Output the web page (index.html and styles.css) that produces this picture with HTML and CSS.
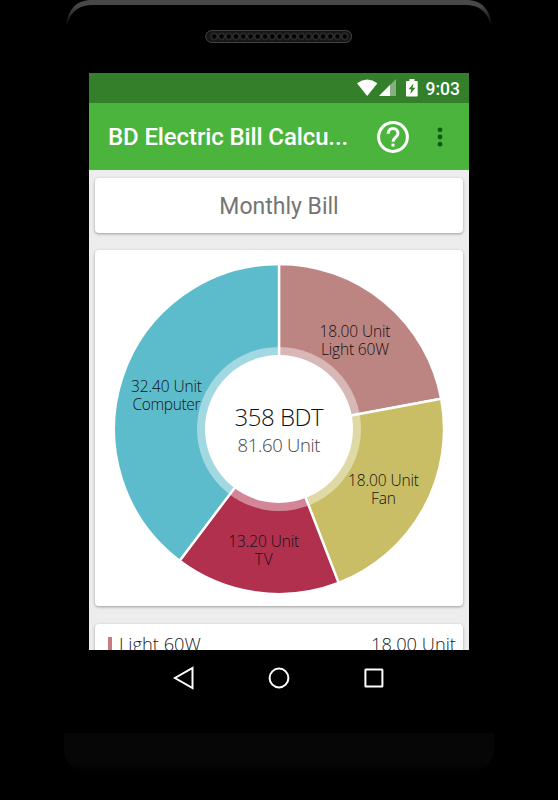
FILE: index.html
```
<!DOCTYPE html>
<html lang="en">
<head>
    <meta charset="UTF-8">
    <meta name="viewport" content="width=device-width, initial-scale=1.0">
    <title>BD Electric Bill Calculator</title>
    <link rel="stylesheet" href="styles.css">
</head>
<body>
    <div class="phone">
        <svg class="phone-top" width="558" height="73" viewBox="0 0 558 73">
            <defs>
                <linearGradient id="rim" x1="0" y1="0" x2="0" y2="28" gradientUnits="userSpaceOnUse">
                    <stop offset="0" stop-color="#484848"/>
                    <stop offset="0.2" stop-color="#484848"/>
                    <stop offset="1" stop-color="#000"/>
                </linearGradient>
                <pattern id="holes" x="210.7" y="32.5" width="7.25" height="8" patternUnits="userSpaceOnUse">
                    <circle cx="3.6" cy="4" r="2.9" fill="#000" stroke="#3c3c3c" stroke-width="1"/>
                </pattern>
            </defs>
            <path d="M66 28C67 10 76 0 92 0H466C482 0 491 10 492 28C488 12 480 5 464 5H94C78 5 70 12 66 28Z" fill="url(#rim)"/>
            <rect x="205.7" y="30.5" width="146" height="12" rx="6" fill="#161616" stroke="#434343"/>
            <rect x="210.7" y="32.5" width="137.7" height="8" fill="url(#holes)"/>
        </svg>

        <div class="screen">
            <div class="status-bar">
                <svg width="56" height="18" viewBox="0 0 56 18">
                    <path d="M0 4.2Q10.2 -3 20.4 4.2L10.2 17Z" fill="#fff"/>
                    <path d="M39 0V17H22Z" fill="#fff" fill-opacity="0.4"/>
                    <path d="M33 6V17H22Z" fill="#fff"/>
                </svg>
                <svg class="battery" width="12" height="18" viewBox="0 0 12 18">
                    <path d="M1 2H3.5V0H8.5V2H11Q11.7 2 11.7 3V16.5Q11.7 17.5 10.7 17.5H1Q0 17.5 0 16.5V3Q0 2 1 2Z" fill="#fff"/>
                    <path d="M7.6 4.5L2.6 10.3H5.3L4.3 15L9.4 8.8H6.5Z" fill="#337f2a"/>
                </svg>
                <span class="clock">9:03</span>
            </div>

            <div class="toolbar">
                <h1>BD Electric Bill Calcu...</h1>
                <svg class="help" width="32" height="32" viewBox="0 0 32 32" fill="none">
                    <circle cx="16" cy="16" r="14.4" stroke="#fff" stroke-width="3"/>
                    <path d="M11.1 12.8C11.1 5.6 21 5.8 21 12.6C21 16.2 16 16.6 16 20.7" stroke="#fff" stroke-width="3"/>
                    <path d="M14.5 22.6H17.5V25.6H14.5Z" fill="#fff"/>
                </svg>
                <svg class="more" width="6" height="20" viewBox="0 0 6 20" fill="#0b5a0e">
                    <circle cx="3" cy="2.8" r="2.4"/>
                    <circle cx="3" cy="10" r="2.4"/>
                    <circle cx="3" cy="17.2" r="2.4"/>
                </svg>
            </div>

            <div class="content">
                <div class="card bill-title">Monthly Bill</div>

                <div class="card chart-card">
                    <svg class="chart" width="368" height="356" viewBox="0 0 368 356">
                        <!-- slices, clockwise from the top -->
                        <g stroke="#fff" stroke-width="2.4">
                            <path d="M184 179V14A165 165 0 0 1 346.2 148.7Z" fill="#bc8582"/>
                            <path d="M184 179L346.2 148.7A165 165 0 0 1 243.6 332.9Z" fill="#c9be66"/>
                            <path d="M184 179L243.6 332.9A165 165 0 0 1 84.6 310.7Z" fill="#b1304e"/>
                            <path d="M184 179L84.6 310.7A165 165 0 0 1 184 14Z" fill="#5dbccb"/>
                        </g>
                        <circle cx="184" cy="179" r="82" fill="#fff" fill-opacity="0.42"/>
                        <circle cx="184" cy="179" r="74" fill="#fff"/>
                        <g class="slice-label">
                            <text x="260" y="87" textLength="71">18.00 Unit</text>
                            <text x="260" y="105" textLength="68">Light 60W</text>
                            <text x="288.5" y="236" textLength="71">18.00 Unit</text>
                            <text x="288.5" y="254" textLength="25">Fan</text>
                            <text x="168.8" y="297" textLength="71">13.20 Unit</text>
                            <text x="168.8" y="315" textLength="18">TV</text>
                            <text x="71.5" y="142" textLength="71">32.40 Unit</text>
                            <text x="71.5" y="160" textLength="68">Computer</text>
                        </g>
                        <text class="total" x="184" y="176" textLength="89">358 BDT</text>
                        <text class="units" x="184" y="202" textLength="83">81.60 Unit</text>
                    </svg>
                </div>

                <div class="card list-card">
                    <span class="marker"></span>
                    <span class="name">Light 60W</span>
                    <span class="value">18.00 Unit</span>
                </div>
            </div>
        </div>

        <div class="nav-bar">
            <svg width="24" height="26" viewBox="0 0 24 26">
                <path d="M20.5 3V23L3 13Z"/>
            </svg>
            <svg width="24" height="26" viewBox="0 0 24 26">
                <circle cx="12" cy="13" r="9.4"/>
            </svg>
            <svg width="24" height="26" viewBox="0 0 24 26">
                <rect x="3.4" y="4.4" width="17" height="17" rx="0.5"/>
            </svg>
        </div>
        <div class="phone-bottom"></div>
    </div>
</body>
</html>
```

FILE: styles.css
```
* {
    box-sizing: border-box;
}

body {
    margin: 0;
    background: #000;
    font-family: Roboto, sans-serif;
}

svg {
    display: block;
    flex: none;
}

.phone {
    width: 558px;
    height: 800px;
    overflow: hidden;
    display: flex;
    flex-direction: column;
    align-items: center;
}

.screen {
    width: 380px;
    height: 577px;
    background: #ededed;
    overflow: hidden;
}

.status-bar {
    height: 30px;
    background: #337f2a;
    display: flex;
    align-items: center;
    justify-content: flex-end;
    padding-right: 9px;
}

.battery {
    margin-right: 8px;
    margin-left: -7px;
}

.clock {
    color: #fff;
    font-size: 17.5px;
    font-weight: 500;
    line-height: 30px;
    padding-top: 2px;
}

.toolbar {
    height: 67px;
    background: #4bb43c;
    display: flex;
    align-items: center;
    padding-left: 19px;
}

h1 {
    margin: 0;
    width: 269px;
    color: #fff;
    font-size: 24px;
    font-weight: 500;
    letter-spacing: -0.12px;
    white-space: nowrap;
}

.more {
    margin-left: 28px;
}

.content {
    padding: 8px 6px 0;
}

.card {
    width: 368px;
    background: #fff;
    border-radius: 4px;
    box-shadow: 0 1px 3px rgba(0, 0, 0, 0.35);
}

.bill-title {
    height: 55px;
    line-height: 58px;
    text-align: center;
    color: #757575;
    font-size: 23px;
}

.chart-card {
    height: 356px;
    margin-top: 17px;
}

.chart text {
    font-family: "Open Sans", sans-serif;
    font-weight: 300;
    text-anchor: middle;
    fill: #111;
}

.slice-label text {
    font-size: 15.5px;
}

.chart .total {
    font-size: 24px;
}

.chart .units {
    font-size: 18.5px;
    fill: #444;
}

.list-card {
    height: 60px;
    margin-top: 18px;
    padding: 6px 7px 0 13px;
    display: flex;
    font-family: "Open Sans", sans-serif;
    font-weight: 300;
    font-size: 18.3px;
    line-height: 27px;
    color: #222;
}

.marker {
    width: 4px;
    height: 20px;
    margin: 7px 7px 0 0;
    background: #c97b7b;
}

.value {
    margin-left: auto;
}

.nav-bar {
    width: 380px;
    height: 56px;
    padding: 0 83px;
    display: flex;
    align-items: center;
    justify-content: space-between;
}

.nav-bar svg {
    fill: none;
    stroke: #fff;
    stroke-width: 2;
}

.phone-bottom {
    width: 430px;
    height: 40px;
    margin-top: 27px;
    border-radius: 3px 3px 24px 24px;
    background: linear-gradient(#060606 70%, #000);
}
```
